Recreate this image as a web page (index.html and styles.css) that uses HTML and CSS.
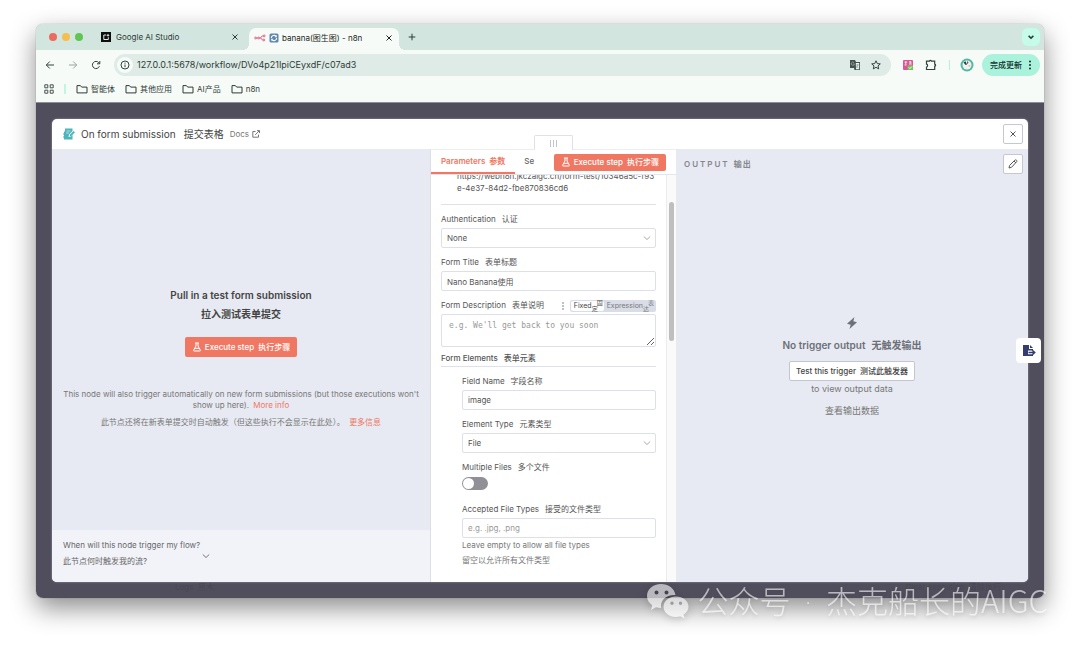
FILE: index.html
```html
<!DOCTYPE html>
<html lang="zh-CN">
<head>
    <meta charset="utf-8">
    <title>banana(图生图) - n8n</title>
    <link rel="stylesheet" href="styles.css">
</head>
<body>
    <!-- Shared icons -->
    <svg class="sprite" aria-hidden="true">
        <symbol id="close" viewBox="0 0 8 8"><path d="M1.5 1.5l5 5M6.5 1.5l-5 5"/></symbol>
        <symbol id="chevron" viewBox="0 0 8 8"><path d="M.8 2.5L4 5.5l3.2-3"/></symbol>
        <symbol id="folder" viewBox="0 0 12 10"><path d="M1 1.6h3.4l1.3 1.5h5.3v5.8H1z"/></symbol>
        <symbol id="flask" viewBox="0 0 10 10"><path d="M3 1h4M4 1v3L1.6 8.2c-.2.4 0 .8.5.8h5.8c.5 0 .7-.4.5-.8L6 4V1M3 6.3h4"/></symbol>
    </svg>

    <div class="window">
        <header class="tab-strip">
            <div class="lights"><i class="red"></i><i class="yellow"></i><i class="green"></i></div>
            <div class="tab">
                <svg class="icon-10" viewBox="0 0 10 10"><path fill="#0b0f0e" d="M0 0h10v10H0z"/><path fill="none" stroke="#fff" stroke-width=".9" d="M5.2 3H2.8v4.5h4.5V5.2"/><path fill="#fff" d="M7 1.5l.5 1.2 1.2.5-1.2.5L7 4.9l-.5-1.2-1.2-.5 1.2-.5z"/></svg>
                <span class="tab-title">Google AI Studio</span>
                <button aria-label="Close tab"><svg class="icon-8 line"><use href="#close"/></svg></button>
            </div>
            <div class="tab active">
                <svg class="n8n-logo" viewBox="0 0 12 8"><g fill="none" stroke="#ea4b71" stroke-width=".9"><circle cx="1.6" cy="4" r=".9"/><circle cx="4.6" cy="4" r=".9"/><circle cx="10.2" cy="1.9" r=".9"/><circle cx="9.800" cy="6" r=".9"/><path d="M2.500 4h1.200M5.500 4h1c1 0 .6-2 1.700-2h1M6.500 4c1.200 0 .8 2 2.200 2"/></g></svg>
                <svg class="icon-10" viewBox="0 0 10 10"><rect x=".5" y=".5" width="9" height="9" rx="1.5" fill="#5d86b0"/><path d="M2.3 5a2.7 2.7 0 0 1 4.8-1.6M7.7 5a2.7 2.7 0 0 1-4.8 1.6" fill="none" stroke="#fff" stroke-width="1.1"/><path fill="#fff" d="M7.8 2v2.2H5.7zM2.2 8V5.8h2.1z"/></svg>
                <span class="tab-title">banana(图生图) - n8n</span>
                <button aria-label="Close tab"><svg class="icon-8 line"><use href="#close"/></svg></button>
            </div>
            <button class="new-tab" aria-label="New tab"><svg class="icon-8 line" viewBox="0 0 8 8"><path d="M4 .7v6.6M.7 4h6.6"/></svg></button>
            <button class="tab-search" aria-label="Search tabs"><svg class="icon-6 bold-line"><use href="#chevron"/></svg></button>
        </header>

        <nav class="toolbar">
            <button class="nav" aria-label="Back"><svg class="icon-10 line" viewBox="0 0 10 10"><path d="M9 5H1.3M4.8 1.5L1.3 5l3.5 3.5"/></svg></button>
            <button class="nav muted" aria-label="Forward"><svg class="icon-10 line" viewBox="0 0 10 10"><path d="M1 5h7.7M5.2 1.5L8.7 5 5.2 8.5"/></svg></button>
            <button class="nav" aria-label="Reload"><svg class="icon-10 line" viewBox="0 0 10 10"><path d="M8.4 6.2A3.6 3.6 0 1 1 7.8 2.7L8.6 3.6M8.8 1v2.8H6"/></svg></button>
            <div class="omnibox">
                <span class="info"><svg class="icon-10 line" viewBox="0 0 10 10"><circle cx="5" cy="5" r="4"/><path d="M5 4.5v2.7M5 2.7v1"/></svg></span>
                <input class="url" type="text" aria-label="Address" value="127.0.0.1:5678/workflow/DVo4p21IpiCEyxdF/c07ad3">
                <button aria-label="Translate"><svg class="icon-12" viewBox="0 0 12 12"><path fill="#45524e" d="M1 1h5l1 2h4v8H5.5L5 9H1z"/><path fill="#eef5f2" d="M6.8 4h3.4v6.2H7z"/><path d="M5 3.600a1.600 1.600 0 1 0 .4 1.400H4M7 6h3M8.500 5v1c0 1.500-.6 2.500-1.500 3M7.500 7l2 2.200" fill="none" stroke="#9aa8a2" stroke-width=".8"/></svg></button>
                <button aria-label="Bookmark this page"><svg class="icon-10 line" viewBox="0 0 10 10"><path d="M5 .8l1.300 2.800 3 .3-2.300 2 .7 3L5 7.300l-2.700 1.600.7-3-2.300-2 3-.3z"/></svg></button>
            </div>
            <button class="ext" aria-label="Extension"><svg class="icon-10" viewBox="0 0 10 10"><rect width="10" height="10" rx="1" fill="#dd5593"/><path d="M1.500 2.200h2.700M2.800 1.200v3.500M1.500 5h2M6 1.800l2.500.4M7.300 1v2.500M6 4h2.800" stroke="#fff" stroke-width=".8" fill="none"/><path fill="#77c25c" d="M4.600 5.400H10V10H4.600z"/><path d="M5.800 7.500l1.100 1.100 1.900-2" stroke="#fff" fill="none"/></svg></button>
            <button class="ext" aria-label="Extensions"><svg class="icon-12 line" viewBox="0 0 12 12"><path stroke-width="1.200" d="M1.500 2.200H4.500C4.500 1 6.500 1 6.500 2.200h3.200v3c1.200 0 1.200 2 0 2v3.300H1.500V8c1.500 0 1.500-2.800 0-2.800z"/></svg></button>
            <span class="divider"></span>
            <button class="ext" aria-label="Profile"><svg class="icon-14" viewBox="0 0 14 14"><circle cx="7" cy="7" r="6.500" fill="#4dbba4"/><circle cx="7" cy="7" r="4.500" fill="#f3f0ee"/><path fill="#333b40" d="M3.500 4.500l2-1.300 1.500 3.300-1.300.5zM7.200 2.800l1.300 2-1.200 1.500z"/><path fill="#dba7a0" d="M8.500 7l2 .5-1.500 1.500z"/></svg></button>
            <button class="update">完成更新 <svg class="dots" viewBox="0 0 4 10"><circle cx="2" cy="1.500" r="1"/><circle cx="2" cy="5" r="1"/><circle cx="2" cy="8.500" r="1"/></svg></button>
        </nav>

        <nav class="bookmarks">
            <svg class="icon-10 line" viewBox="0 0 10 10"><path d="M.8.8h3v3h-3zM6.200.8h3v3h-3zM.8 6.200h3v3h-3zM6.200 6.200h3v3h-3z"/></svg>
            <span class="divider"></span>
            <a href="#"><svg class="folder line"><use href="#folder"/></svg>智能体</a>
            <a href="#"><svg class="folder line"><use href="#folder"/></svg>其他应用</a>
            <a href="#"><svg class="folder line"><use href="#folder"/></svg>AI产品</a>
            <a href="#"><svg class="folder line"><use href="#folder"/></svg>n8n</a>
        </nav>

        <main class="backdrop">
            <section class="modal">
                <header class="modal-header">
                    <svg class="icon-12" viewBox="0 0 12 12"><path fill="#4bb5bb" d="M2 .5h7.500V3L6 6.500 5.500 9l2.500-.5 1.500-1.500v4.500H1V9.500H0v-1h1v-2H0v-1h1v-2h1z"/><path d="M3.500 3h4M3 5h3" stroke="#c9eaec" stroke-width=".8"/><path fill="#4bb5bb" d="M10.600 3L12 4.300 8.300 8l-1.800.4.500-1.800z"/></svg>
                    <h1>On form submission<span>提交表格</span></h1>
                    <a class="docs" href="#">Docs<svg class="icon-8" viewBox="0 0 8 8"><path d="M3.500 1.500H.8v5.700h5.700V4.600M5 .6h2.500v2.500M7.400.6L3.200 4.900"/></svg></a>
                    <button class="square" aria-label="Close"><svg class="icon-8 line"><use href="#close"/></svg></button>
                </header>

                <div class="panels">
                    <section class="input-panel">
                        <div class="trigger">
                            <h2>Pull in a test form submission</h2>
                            <h2>拉入测试表单提交</h2>
                            <button class="execute"><svg class="icon-10"><use href="#flask"/></svg>Execute step<span>执行步骤</span></button>
                            <p class="note">This node will also trigger automatically on new form submissions (but those executions won't show up here). <a href="#">More info</a></p>
                            <p class="note">此节点还将在新表单提交时自动触发（但这些执行不会显示在此处）。 <a href="#">更多信息</a></p>
                        </div>
                        <button class="faq">
                            <span>When will this node trigger my flow?<br>此节点何时触发我的流?</span>
                            <svg class="icon-8"><use href="#chevron"/></svg>
                        </button>
                    </section>

                    <section class="params">
                        <div class="drag" aria-hidden="true"><i></i><i></i><i></i></div>
                        <div class="param-tabs">
                            <a class="current" href="#">Parameters<span>参数</span></a>
                            <a class="cut" href="#">Se</a>
                            <button class="execute"><svg class="icon-10"><use href="#flask"/></svg>Execute step<span>执行步骤</span></button>
                        </div>
                        <div class="scroller">
                            <form class="form">
                                <p class="webhook">https://webn8n.jkczaigc.cn/form-test/10346a5c-f93e-4e37-84d2-fbe870836cd6</p>
                                <div class="field">
                                    <label for="auth">Authentication<span>认证</span></label>
                                    <div class="select"><select id="auth"><option>None</option></select><svg class="icon-8"><use href="#chevron"/></svg></div>
                                </div>
                                <div class="field">
                                    <label for="title">Form Title<span>表单标题</span></label>
                                    <input id="title" type="text" value="Nano Banana使用">
                                </div>
                                <div class="field">
                                    <div class="label-row">
                                        <label for="desc">Form Description<span>表单说明</span></label>
                                        <svg class="dots" viewBox="0 0 4 10"><circle cx="2" cy="2" r=".7"/><circle cx="2" cy="5" r=".7"/><circle cx="2" cy="8" r=".7"/></svg>
                                        <div class="switch">
                                            <button type="button" class="on">Fixed<span class="stack"><b>固</b><b>定</b></span></button>
                                            <button type="button">Expression<span class="stack"><b>表</b><b>达</b></span></button>
                                        </div>
                                    </div>
                                    <textarea id="desc" placeholder="e.g. We'll get back to you soon"></textarea>
                                </div>
                                <h3>Form Elements<span>表单元素</span></h3>
                                <div class="nested">
                                    <div class="field">
                                        <label for="name">Field Name<span>字段名称</span></label>
                                        <input id="name" type="text" value="image">
                                    </div>
                                    <div class="field">
                                        <label for="type">Element Type<span>元素类型</span></label>
                                        <div class="select"><select id="type"><option>File</option></select><svg class="icon-8"><use href="#chevron"/></svg></div>
                                    </div>
                                    <div class="field">
                                        <label for="multiple">Multiple Files<span>多个文件</span></label>
                                        <input id="multiple" type="checkbox" class="toggle">
                                    </div>
                                    <div class="field">
                                        <label for="accept">Accepted File Types<span>接受的文件类型</span></label>
                                        <input id="accept" type="text" placeholder="e.g. .jpg, .png">
                                        <p class="hint">Leave empty to allow all file types<br>留空以允许所有文件类型</p>
                                    </div>
                                </div>
                            </form>
                            <div class="scrollbar"><div class="thumb"></div></div>
                        </div>
                    </section>

                    <section class="output-panel">
                        <div class="output-head">
                            <h2>OUTPUT<span>输出</span></h2>
                            <button class="square" aria-label="Edit output"><svg class="icon-10 line" viewBox="0 0 10 10"><path d="M1 9l.6-2.600 5.200-5.200c.5-.5 1.300-.4 1.700 0 .5.5.5 1.200 0 1.700L3.500 8.300zM6 2l2 2"/></svg></button>
                        </div>
                        <div class="empty">
                            <svg class="icon-12" viewBox="0 0 12 12"><path fill="#6d7078" d="M8.500 0L1 6.700l3.700 1L3.500 12l7.500-6.700-3.700-1z"/></svg>
                            <h2>No trigger output<span>无触发输出</span></h2>
                            <button class="test">Test this trigger<span>测试此触发器</span></button>
                            <p>to view output data</p>
                            <p class="zh">查看输出数据</p>
                        </div>
                    </section>
                </div>
            </section>
            <footer class="logs"><span>Logs&nbsp; 原木</span><span>Clear execution&nbsp; 清除执行</span></footer>
        </main>

        <button class="side-tool" aria-label="Export page"><svg class="icon-14" viewBox="0 0 14 14"><path fill="#343d70" d="M1 1h6v4h4v1.500H6v3.800h5V12H1z"/><path fill="#343d70" d="M8 1l3 3H8z"/><path d="M6.500 8.500h6M10.300 6.300l2.400 2.200-2.400 2.200" fill="none" stroke="#343d70" stroke-width="1.500"/></svg></button>
    </div>

    <div class="watermark">
        <svg viewBox="0 0 44 36"><path fill="#fff" fill-rule="evenodd" d="M15 1C7 1 1 6.300 1 13c0 3.800 2 7 5.200 9.200L5 27l5-2.700c1.700.5 3.300.7 5.200.7-1.700-7.500 5-13.500 14.300-13C28.500 5.500 22.500 1 15 1zM10.500 7.500a2 2 0 1 1 0 4 2 2 0 0 1 0-4zm10 0a2 2 0 1 1 0 4 2 2 0 0 1 0-4z"/><path fill="#fff" fill-rule="evenodd" d="M30 13.500c-7 0-12.500 4.500-12.500 10.300S23 34 30 34c1.500 0 3-.3 4.400-.7l4.200 2.200-1.100-3.700c3-2 5-4.800 5-8 0-5.800-5.500-10.300-12.500-10.300zM26 18.500a1.700 1.700 0 1 1 0 3.400 1.700 1.700 0 0 1 0-3.400zm8.500 0a1.700 1.700 0 1 1 0 3.400 1.700 1.700 0 0 1 0-3.400z"/></svg>
        <span>公众号<span class="separator"> · </span>杰克船长的AIGC</span>
    </div>
</body>
</html>
```
FILE: styles.css
```css
* {
    box-sizing: border-box;
}

body {
    margin: 0;
    height: 100vh;
    padding: 24px 36px 48px;
    display: flex;
    background: #fff;
    font-family: Inter, "Noto Sans CJK SC", sans-serif;
    font-size: 8px;
    line-height: 16px;
    color: #555;
    overflow: hidden;
    position: relative;
}

h1, h2, h3, p {
    margin: 0;
}

button, input, select, textarea {
    font: inherit;
    color: inherit;
    margin: 0;
}

button {
    border: 0;
    padding: 0;
    background: none;
    display: flex;
    align-items: center;
    justify-content: center;
    white-space: nowrap;
}

a {
    color: inherit;
    text-decoration: none;
}

svg {
    display: block;
    flex: none;
    fill: none;
    stroke: none;
}

.sprite { position: absolute; width: 0; height: 0; }
.icon-6 { width: 6px; height: 6px; }
.icon-8 { width: 8px; height: 8px; }
.icon-10 { width: 10px; height: 10px; }
.icon-12 { width: 12px; height: 12px; }
.icon-14 { width: 14px; height: 14px; }
.line { stroke: currentColor; stroke-width: 1; }
.bold-line { stroke: currentColor; stroke-width: 2; }
.dots { width: 4px; height: 10px; fill: currentColor; }

.window {
    flex: 1;
    min-width: 0;
    display: flex;
    flex-direction: column;
    position: relative;
    border-radius: 7px;
    background: #f6fbf8;
    box-shadow: 0 0 1px rgba(0, 0, 0, 0.5), 0 10px 26px rgba(0, 0, 0, 0.45);
}

/* Browser chrome */
.tab-strip {
    height: 26px;
    display: flex;
    align-items: center;
    padding: 0 4px 0 13px;
    border-radius: 7px 7px 0 0;
    background: #d2e6df;
    color: #2f3b37;
}

.lights {
    display: flex;
    gap: 5px;
    margin-right: 10px;
}

.lights i { width: 8px; height: 8px; border-radius: 50%; }
.red { background: #ed6a5e; }
.yellow { background: #f5bf4f; }
.green { background: #61c554; }

.tab {
    width: 156px;
    height: 22px;
    display: flex;
    align-items: center;
    gap: 5px;
    padding: 0 10px 0 8px;
}

.tab-title { flex: 1; }

.tab.active {
    width: 150px;
    align-self: flex-end;
    padding: 0 6px 2px 5px;
    gap: 3px;
    position: relative;
    border-radius: 7px 7px 0 0;
    background: #f6fbf8;
    color: #1d2522;
}

/* Curved feet of the active tab */
.tab.active::before, .tab.active::after {
    content: "";
    position: absolute;
    bottom: 0;
    width: 6px;
    height: 6px;
}

.tab.active::before {
    left: -6px;
    background: radial-gradient(circle at 0 0, transparent 6px, #f6fbf8 6px);
}

.tab.active::after {
    right: -6px;
    background: radial-gradient(circle at 100% 0, transparent 6px, #f6fbf8 6px);
}

.n8n-logo { width: 12px; height: 8px; }
.new-tab { margin-left: 9px; }

.tab-search {
    margin-left: auto;
    width: 18px;
    height: 18px;
    border-radius: 6px;
    background: #c4fbe9;
}

.toolbar {
    display: flex;
    align-items: center;
    padding: 4px 4px 2px 9px;
    color: #34423d;
}

.nav { margin-right: 13px; }
.nav.muted { color: #9aa5a1; }

.omnibox {
    flex: 1;
    height: 22px;
    display: flex;
    align-items: center;
    gap: 10px;
    padding: 0 10px 0 3px;
    border-radius: 11px;
    background: #deebe6;
    margin-right: 12px;
}

.info {
    width: 16px;
    height: 16px;
    display: flex;
    align-items: center;
    justify-content: center;
    border-radius: 50%;
    background: #f6fbf8;
}

.url {
    flex: 1;
    border: 0;
    padding: 0;
    margin-left: -6px;
    background: none;
    font-size: 9px;
    color: #2f3b37;
}

.ext { margin-right: 12px; }

.divider {
    width: 1px;
    height: 10px;
    background: #b4f0dc;
}

.toolbar .divider { margin-right: 10px; }
.toolbar .divider + .ext { margin-right: 8px; }

.update {
    height: 22px;
    padding: 0 8px;
    gap: 6px;
    border-radius: 11px;
    background: #abf2dc;
    color: #10302a;
    font-weight: 500;
}

.bookmarks {
    display: flex;
    align-items: center;
    gap: 10px;
    height: 24px;
    padding: 0 8px 2px;
    color: #45524e;
}

.bookmarks .divider { width: 2px; background: #c0f5e4; }

.bookmarks a {
    display: flex;
    align-items: center;
    gap: 3px;
    color: #2f3b37;
}

.folder { width: 12px; height: 10px; }

/* Node dialog */
.backdrop {
    flex: 1;
    min-height: 0;
    display: flex;
    flex-direction: column;
    padding: 16px 16px 0;
    border-top: 1px solid #8f9096;
    border-radius: 0 0 7px 7px;
    background: #504e5c;
}

.modal {
    flex: 1;
    min-height: 0;
    display: flex;
    flex-direction: column;
    border-radius: 5px;
    background: #fff;
    box-shadow: 0 0 2px #a5a5b2;
}

.logs {
    display: flex;
    justify-content: space-between;
    height: 16px;
    padding: 0 27px 0 123px;
    line-height: 10px;
    color: #484654;
}

.modal-header {
    height: 30px;
    display: flex;
    align-items: center;
    gap: 6px;
    padding: 0 5px 0 11px;
}

.modal-header h1 {
    font-size: 10px;
    font-weight: 400;
    color: #444;
}

h1 span { margin-left: 8px; }
h2 span { margin-left: 6px; }

.docs {
    display: flex;
    align-items: center;
    gap: 3px;
    color: #777;
}

.docs svg { stroke: currentColor; }

.square {
    width: 20px;
    height: 20px;
    margin-left: auto;
    border: 1px solid #c6c8d0;
    border-radius: 2px;
    background: #fff;
    color: #555;
}

.panels {
    flex: 1;
    min-height: 0;
    display: grid;
    grid-template-columns: minmax(0, 378fr) 246px minmax(0, 352fr);
    grid-template-rows: minmax(0, 1fr);
}

.input-panel {
    display: flex;
    flex-direction: column;
    background: #e7eaf2;
    border-bottom-left-radius: 5px;
}

.trigger {
    flex: 1;
    display: flex;
    flex-direction: column;
    align-items: center;
    justify-content: center;
    padding: 40px 8px 0;
    text-align: center;
}

.trigger h2 {
    font-size: 10px;
    line-height: 19px;
    font-weight: 600;
    color: #444;
}

.execute {
    height: 20px;
    padding: 0 7px;
    border-radius: 2px;
    background: #f07863;
    color: #fff;
    font-weight: 500;
}

.execute svg {
    stroke: currentColor;
    margin-right: 3px;
}

.execute span { margin-left: 4px; }
.trigger .execute { margin: 13px 0 32px; }

.note {
    line-height: 11px;
    margin-bottom: 6px;
    color: #777;
}

.note a {
    color: #f07863;
    margin-left: 2px;
}

.faq {
    height: 52px;
    justify-content: flex-start;
    gap: 2px;
    padding: 0 11px;
    text-align: left;
    background: #f2f3f9;
    border-bottom-left-radius: 5px;
    color: #666;
}

.faq span { padding-bottom: 6px; }
.faq svg { stroke: #777; }

.params {
    position: relative;
    display: flex;
    flex-direction: column;
    min-height: 0;
    background: #fff;
    border-left: 1px solid #dcdfe8;
}

/* Drag handle sits over the dialog header */
.drag {
    position: absolute;
    left: 103px;
    top: -14px;
    width: 39px;
    height: 15px;
    display: flex;
    align-items: center;
    justify-content: center;
    gap: 2px;
    border: 1px solid #dfe1ea;
    border-bottom: 0;
    border-radius: 2px 2px 0 0;
    background: #fff;
}

.drag i { width: 1px; height: 7px; background: #c0c4d0; }

.param-tabs {
    height: 26px;
    display: flex;
    align-items: stretch;
    padding-right: 10px;
    border-top: 1px solid #eceef4;
    border-bottom: 1px solid #e2e5ee;
    line-height: 22px;
    font-weight: 500;
}

.current {
    padding: 0 10px;
    border-bottom: 2px solid #f07863;
    color: #f07863;
    font-weight: 600;
}

.current span { margin-left: 4px; }
.cut { padding-left: 9px; color: #666; }

.param-tabs .execute {
    align-self: center;
    height: 17px;
    margin-left: auto;
}

.scroller {
    flex: 1;
    min-height: 0;
    display: flex;
    overflow: hidden;
}

/* Scrolled past the first rows */
.form {
    flex: 1;
    margin-top: -5px;
    padding: 0 10px;
}

.webhook {
    padding: 0 0 10px 16px;
    margin-bottom: 7px;
    line-height: 12px;
    word-break: break-all;
    border-bottom: 1px solid #dfe1ea;
}

.scrollbar {
    width: 10px;
    border-left: 1px solid #ececf0;
    background: #fafafa;
}

.thumb {
    width: 5px;
    height: 139px;
    margin: 27px 0 0 2px;
    border-radius: 3px;
    background: #bfbfbf;
}

.field { margin-bottom: 7px; }

.field label {
    display: block;
    line-height: 15px;
    padding-bottom: 1px;
}

label span, h3 span { margin-left: 6px; }

.field input[type="text"], .field select, .field textarea {
    display: block;
    width: 100%;
    height: 20px;
    padding: 0 5px;
    border: 1px solid #dde0ea;
    border-radius: 2px;
    background: #fff;
    color: #555;
    appearance: none;
}

.field textarea {
    height: 33px;
    padding: 3px 7px;
    font-family: "DejaVu Sans Mono", monospace;
}

::placeholder { color: #999; opacity: 1; }

.select { position: relative; }

.select svg {
    position: absolute;
    right: 5px;
    top: 6px;
    stroke: #aaa;
}

.label-row {
    display: flex;
    align-items: center;
}

.label-row .dots { margin: 0 5px 0 auto; }

.switch {
    display: flex;
    height: 12px;
    padding: 1px;
    border-radius: 2px;
    background: #d9dde8;
}

.switch button {
    padding: 0 1px 0 3px;
    font-size: 7px;
    border-radius: 2px;
    color: #777;
}

.switch .on { background: #fff; color: #444; }

.stack {
    width: 11px;
    font-size: 6px;
    line-height: 6px;
}

.stack b { display: block; font-weight: 400; text-align: left; }
.stack b:first-child { text-align: right; }

h3 {
    margin: -3px 0 7px;
    font-size: 8px;
    line-height: 15px;
    font-weight: 500;
    border-bottom: 1px solid #dfe1ea;
}

.nested { padding-left: 21px; }

.toggle {
    appearance: none;
    display: flex;
    align-items: center;
    width: 26px;
    height: 13px;
    padding: 0 1px;
    margin: 1px 0 12px;
    border-radius: 7px;
    background: #909096;
}

.toggle::before {
    content: "";
    width: 11px;
    height: 11px;
    border-radius: 50%;
    background: #fff;
}

.toggle:checked { justify-content: flex-end; }

.hint {
    line-height: 15px;
    color: #777;
}

.output-panel {
    display: flex;
    flex-direction: column;
    background: #e7eaf2;
    border-bottom-right-radius: 5px;
}

.output-head {
    height: 30px;
    display: flex;
    align-items: center;
    padding: 0 5px 0 8px;
}

.output-head h2 {
    font-size: 8px;
    font-weight: 600;
    letter-spacing: 2px;
    color: #85878f;
}

.output-head span {
    margin-left: 4px;
    letter-spacing: 1px;
}

.empty {
    flex: 1;
    display: flex;
    flex-direction: column;
    align-items: center;
    justify-content: center;
    padding-bottom: 26px;
    font-size: 9px;
    color: #777;
}

.empty h2 {
    margin: 8px 0;
    font-size: 10px;
    font-weight: 600;
    color: #6d7078;
}

.test {
    height: 20px;
    padding: 0 6px;
    border: 1px solid #c3c6d0;
    border-radius: 2px;
    background: #fff;
    color: #444;
    font-size: 8px;
    font-weight: 500;
}

.test span { margin-left: 4px; }
.zh { margin-top: 6px; }

/* Floating extension button */
.side-tool {
    position: absolute;
    right: 3px;
    top: 314px;
    width: 25px;
    height: 25px;
    border-radius: 4px;
    background: #fff;
}

.watermark {
    position: absolute;
    right: 32px;
    bottom: 26px;
    display: flex;
    align-items: center;
    gap: 7px;
    font-family: "Noto Sans CJK SC", sans-serif;
    font-size: 31px;
    line-height: 36px;
    font-weight: 300;
    color: #fff;
    opacity: 0.6;
    white-space: nowrap;
    text-shadow: 0 2px 4px rgba(0, 0, 0, 0.2);
}

.separator {
    padding: 0 3px;
    font-family: "DejaVu Sans", sans-serif;
}

.watermark svg {
    width: 44px;
    height: 36px;
    filter: drop-shadow(0 2px 4px rgba(0, 0, 0, 0.3));
}
```
